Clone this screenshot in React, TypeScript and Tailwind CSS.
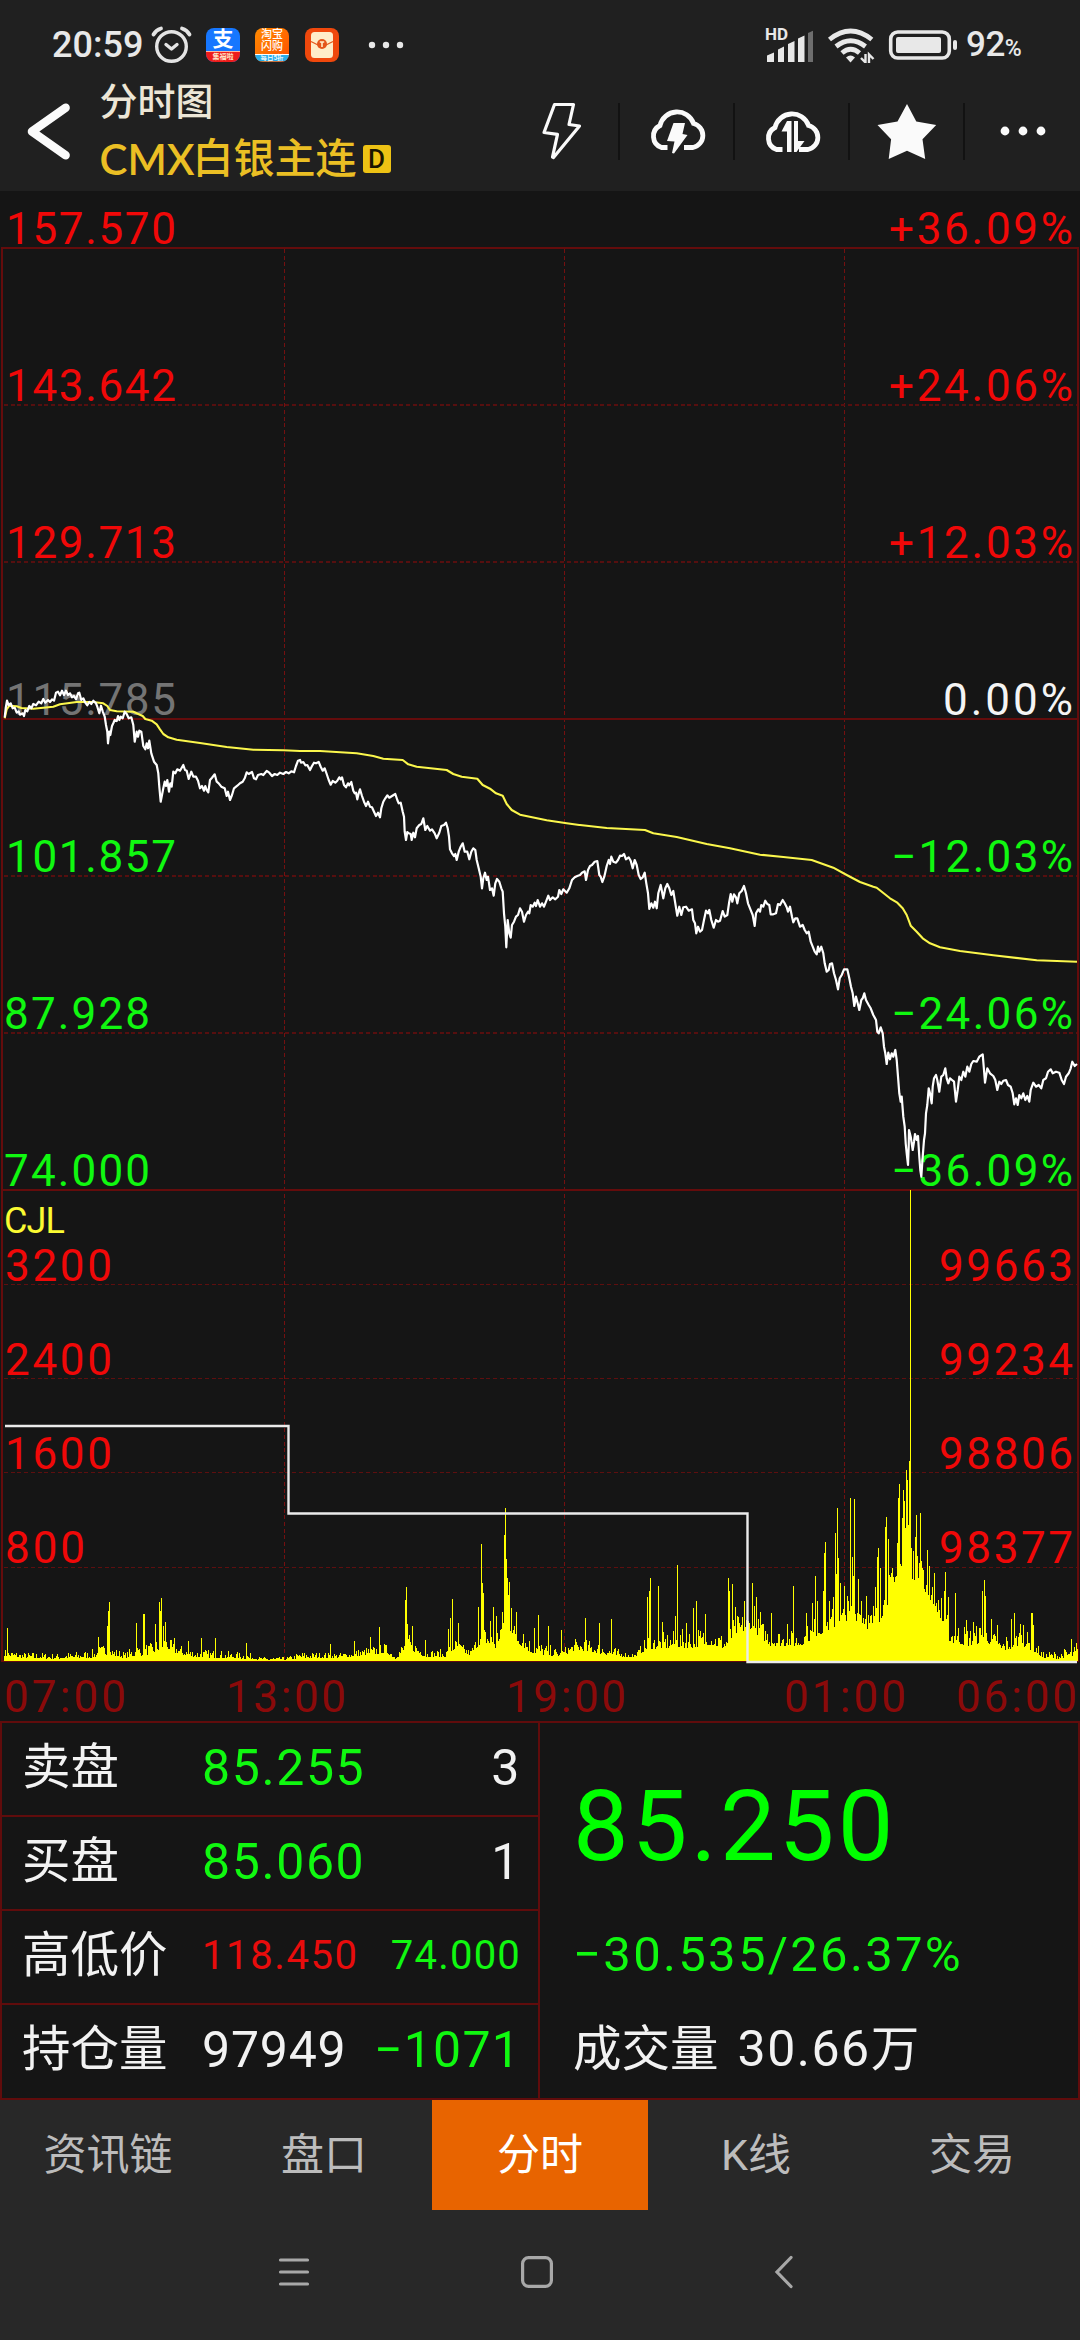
import type { ReactNode } from "react";

const RED = "#f00808";
const GREEN = "#10f810";

type Run = { x: number; y: number; d: string };

const priceRuns: Run[] = [
  {
    x: 0,
    y: 640,
    d: "14,232 17,205 21,182 26,196 32,190 38,205 44,203 50,218 56,214 60,224 68,220 72,228 76,210 82,214 88,198 94,205 100,192 108,196 116,185 124,190 130,177 136,188 144,180 150,186 156,178 162,182 168,158 174,155 180,166 186,152 192,165 198,152 204,165 210,160 216,172 222,168 228,178 234,160 238,158 244,180 250,175 256,188 262,196 268,186 274,192 280,182 288,190 292,200 298,220 303,197 308,214 314,230 318,255 322,275 324,310 328,275 331,285 336,258 340,250 344,240 350,243 354,228 358,240 362,230 368,235 374,215 380,222 386,235 394,232 400,255 404,305 410,275 414,290 418,272 424,275 430,318 436,328 440,310 444,325 448,302 454,340 462,365 470,375 475,400 478,440 482,485 486,465 490,445 494,425 498,438 502,420 507,455 511,430 515,440 520,395 526,400 532,388 540,392 550,375 555,390 560,392 566,417 574,395 580,410 588,410 594,422 600,445 606,438 612,452 616,438 620,450 625,457 630,420 636,413 644,403 650,425 656,430 664,440 674,445 680,468 684,455 690,480 696,465 702,445 712,437 720,430 728,425 734,415 740,397 746,402 756,396 762,415 768,418 774,405 784,402 790,405 800,393 808,398 816,408 824,402 832,405 840,398 850,402 858,396 866,400 874,394 882,397 888,378 894,362 900,360",
  },
  {
    x: 290,
    y: 700,
    d: "33,188 40,186 46,196 52,195 60,210 66,198 72,188 78,190 86,186 92,200 98,212 104,205 110,222 116,240 122,254 128,243 136,248 142,242 148,232 152,238 156,232 162,255 168,262 174,250 178,256 184,246 190,272 194,280 198,278 202,298 206,280 210,268 216,288 222,305 228,318 234,305 240,320 246,322 252,335 258,348 264,338 270,352 274,325 280,305 286,295 292,286 298,293 306,288 316,282 322,300 326,310 332,308 338,335 342,350 344,395 348,420 352,396 356,400 362,402 365,420 370,398 375,412 380,385 388,375 394,372 400,355 406,390 412,378 420,392 426,388 434,400 440,415 448,398 454,378 462,375 468,368 473,385 477,410 480,448 486,460 492,468 496,462 500,480 506,455 512,440 518,430 524,455 532,455 538,478 544,455 550,445 556,450 560,480 566,505 572,530 576,565 580,535 585,518 590,540 594,530 600,570 606,565 611,587 616,550 621,537 628,545 634,565 638,575 642,640 646,680 649,742 653,660 658,700 662,713 666,675 672,665 678,650 684,645 690,625 696,635 702,665 708,645 714,635 718,640 722,615 728,620 734,608 738,618 743,600 750,620 756,610 762,620 768,605 775,587 780,600 788,592 796,598 804,590 808,570 814,582 820,568 830,578 838,565 846,540 854,532 862,528 870,525 876,518 884,514 888,540 894,510 900,498",
  },
  {
    x: 580,
    y: 760,
    d: "36,315 44,305 52,303 58,345 62,350 67,366 73,350 80,318 86,300 90,312 94,290 100,305 108,308 114,300 120,287 126,288 132,282 138,298 146,292 152,302 158,325 164,300 170,315 176,345 182,357 188,352 194,338 199,370 204,400 208,447 214,430 220,443 225,425 230,445 235,400 242,375 250,415 256,385 262,372 268,385 274,405 280,393 285,425 292,467 298,440 304,465 310,442 318,440 326,452 336,448 340,480 345,490 349,520 354,500 360,515 366,510 372,480 378,452 384,460 388,450 394,480 401,503 408,480 414,485 420,482 428,453 434,470 442,465 447,430 452,402 457,425 462,403 468,412 472,430 478,400 485,393 492,378 498,400 504,430 510,445 518,465 524,498 528,460 535,448 540,455 544,435 550,440 556,422 562,432 568,435 572,463 580,463 588,460 594,432 600,435 608,420 614,430 620,442 624,455 630,440 636,470 640,487 646,475 652,475 660,500 668,495 674,510 680,520 686,515 692,545 698,560 704,575 710,583 714,560 718,575 724,560 730,580 734,610 740,635 746,630 750,612 756,610 762,640 768,660 774,688 779,655 785,645 792,628 802,628 808,655 813,680 818,700 823,738 828,710 833,730 838,750 844,720 848,715 853,700 858,720 866,735 872,745 880,765 888,780",
  },
  {
    x: 780,
    y: 860,
    d: "292,515 296,520 302,502 308,520 312,560 316,580 320,612 325,578 330,598 335,580 340,590 346,570 350,600 354,650 358,700 362,725 365,710 370,770 374,800 377,850 380,880 384,915 386,860 387,810 392,830 395,850 398,870 402,845 405,822 410,840 414,828 418,890 421,930 424,950 428,890 432,840 435,820 438,760 442,735 446,685 450,700 455,730 458,680 462,655 468,645 472,660 478,695 484,650 490,645 496,625 500,655 505,670 510,655 516,660 522,665 528,725 533,690 538,650 544,660 550,635 556,650 562,620 568,635 574,612 580,603 590,605 598,590 608,583 612,630 615,668 622,625 630,640 640,648 646,660 652,690 658,665 664,672 670,662 678,660 684,675 692,680 698,700 703,733 708,715 713,735 718,705 724,715 730,700 736,720 742,708 748,725 752,690 760,668 768,680 776,675 784,685 790,660 798,655 804,635 812,628 818,640 828,635 838,638 845,660 852,672 858,650 866,640 872,625 877,605 884,618 891,612",
  },
];

const averageRuns: Run[] = [
  {
    x: 0,
    y: 640,
    d: "14,235 20,208 28,197 50,199 64,204 100,206 160,200 180,193 230,186 280,186 310,190 322,198 330,210 350,214 400,215 415,222 428,228 436,237 455,242 470,253 480,268 490,282 505,292 530,299 600,309 680,321 760,329 850,331 900,333",
  },
  {
    x: 290,
    y: 700,
    d: "90,153 200,160 250,168 280,176 338,180 355,193 380,200 470,210 490,222 515,230 562,236 578,255 600,266 618,280 638,287 650,312 665,330 690,344 770,361 830,370 868,375",
  },
  {
    x: 580,
    y: 760,
    d: "0,195 80,204 195,210 220,220 290,231 380,252 450,265 540,284 610,291 695,300 760,323 800,345 840,366 880,380",
  },
  {
    x: 780,
    y: 860,
    d: "290,83 330,115 352,128 368,145 380,165 392,197 410,215 428,235 450,250 480,262 540,273 640,286 770,301 891,305",
  },
];

const toPoints = (runs: Run[]) =>
  runs
    .flatMap((r) =>
      r.d.split(" ").map((p) => {
        const [px, py] = p.split(",").map(Number);
        return `${(r.x + px / 3).toFixed(1)},${(r.y + py / 3).toFixed(1)}`;
      }),
    )
    .join(" ");

// [x, low, high] – range of the per-minute volume
const envelope: [number, number, number][] = [
  [4, 5, 12], [20, 3, 9], [60, 2, 8], [90, 3, 11], [105, 6, 18], [125, 3, 9], [135, 5, 18], [150, 6, 18],
  [164, 14, 26], [175, 8, 18], [190, 4, 13], [220, 3, 11], [250, 2, 8], [262, 1, 4], [285, 1, 4], [300, 3, 9],
  [340, 3, 9], [360, 5, 13], [385, 8, 18], [395, 2, 8], [408, 12, 28], [425, 4, 11], [445, 4, 12], [455, 12, 22],
  [470, 5, 12], [482, 20, 36], [495, 12, 30], [506, 36, 64], [515, 20, 36], [530, 8, 24], [545, 6, 18],
  [560, 4, 11], [575, 11, 22], [600, 7, 22], [620, 4, 11], [635, 4, 8], [648, 12, 28], [670, 13, 30], [690, 13, 34],
  [710, 16, 34], [725, 12, 28], [735, 26, 46], [750, 32, 50], [770, 15, 34], [800, 15, 30], [820, 26, 50],
  [845, 40, 60], [860, 40, 66], [873, 26, 50], [890, 62, 90], [905, 86, 136], [918, 78, 108], [935, 54, 70],
  [950, 18, 42], [970, 15, 35], [985, 20, 40], [1000, 8, 24], [1020, 16, 35], [1033, 10, 25], [1042, 3, 9],
  [1060, 2, 12], [1077, 5, 16],
];

const spikes: [number, number][] = [
  [7, 33], [98, 24], [107, 35], [108, 50], [109, 59], [136, 38], [143, 47], [144, 47], [155, 37], [159, 59],
  [160, 50], [161, 63], [163, 35], [165, 39], [174, 23], [188, 20], [201, 23], [215, 23], [246, 18], [330, 17],
  [354, 20], [370, 24], [379, 34], [405, 61], [406, 74], [407, 37], [412, 35], [425, 21], [448, 32], [450, 43],
  [452, 62], [458, 38], [478, 54], [481, 117], [482, 78], [483, 68], [490, 40], [493, 54], [496, 45], [504, 126],
  [505, 153], [506, 102], [507, 83], [508, 66], [509, 79], [511, 53], [516, 49], [523, 27], [534, 33], [538, 46],
  [548, 35], [561, 31], [585, 43], [599, 38], [611, 42], [647, 64], [649, 70], [650, 83], [658, 75], [662, 39],
  [675, 45], [677, 96], [686, 38], [693, 53], [696, 60], [705, 47], [728, 83], [729, 70], [732, 77], [735, 54],
  [744, 60], [752, 78], [754, 55], [756, 64], [760, 49], [771, 48], [787, 37], [793, 75], [806, 48], [812, 58],
  [815, 85], [817, 60], [823, 70], [824, 108], [825, 119], [829, 60], [833, 64], [835, 128], [836, 87], [837, 153],
  [838, 103], [840, 78], [844, 75], [847, 65], [850, 163], [852, 104], [853, 85], [854, 162], [858, 82], [861, 60],
  [866, 65], [873, 55], [875, 74], [877, 104], [878, 113], [880, 93], [885, 134], [886, 144], [888, 122], [891, 88],
  [896, 85], [897, 118], [898, 163], [899, 177], [900, 97], [902, 143], [903, 171], [904, 160], [905, 133],
  [906, 191], [907, 181], [908, 136], [909, 200], [910, 471], [911, 113], [913, 110], [915, 124], [916, 146],
  [917, 105], [920, 148], [921, 100], [923, 91], [927, 111], [929, 95], [934, 88], [941, 63], [944, 70], [945, 89],
  [948, 64], [955, 68], [966, 41], [973, 39], [982, 70], [984, 81], [985, 65], [991, 42], [997, 36], [1011, 42],
  [1014, 48], [1020, 37], [1023, 36], [1031, 48], [1032, 48], [1033, 36], [1071, 22], [1076, 18],
];

function volumePath() {
  const spikeAt = new Map(spikes);
  let seed = 7;
  let d = "";
  for (let x = 4; x <= 1077; x++) {
    seed = (seed * 16807) % 2147483647;
    const r = seed / 2147483647;
    let i = 0;
    while (i < envelope.length - 2 && envelope[i + 1][0] < x) i++;
    const [x0, l0, h0] = envelope[i];
    const [x1, l1, h1] = envelope[i + 1];
    const t = Math.min(1, Math.max(0, (x - x0) / (x1 - x0)));
    const lo = l0 + (l1 - l0) * t;
    const hi = h0 + (h1 - h0) * t;
    const h = Math.round(Math.max(spikeAt.get(x) ?? 0, lo + (hi - lo) * r * r));
    d += `M${x} 1661v-${h}h1v${h}z`;
  }
  return d;
}

type Label = { t: string; y: number; x: number; w: number; c: string };

const priceLabels: Label[] = [
  { t: "157.570", y: 244, x: 6, w: 170, c: RED },
  { t: "143.642", y: 401, x: 6, w: 170, c: RED },
  { t: "129.713", y: 558, x: 6, w: 170, c: RED },
  { t: "115.785", y: 715, x: 6, w: 170, c: "#747474" },
  { t: "101.857", y: 872, x: 6, w: 170, c: GREEN },
  { t: "87.928", y: 1029, x: 4, w: 146, c: GREEN },
  { t: "74.000", y: 1186, x: 4, w: 146, c: GREEN },
  { t: "+36.09%", y: 244, x: 889, w: 184, c: RED },
  { t: "+24.06%", y: 401, x: 889, w: 184, c: RED },
  { t: "+12.03%", y: 558, x: 889, w: 184, c: RED },
  { t: "0.00%", y: 715, x: 943, w: 130, c: "#f4f4f4" },
  { t: "−12.03%", y: 872, x: 891, w: 182, c: GREEN },
  { t: "−24.06%", y: 1029, x: 891, w: 182, c: GREEN },
  { t: "−36.09%", y: 1186, x: 891, w: 182, c: GREEN },
];

const volumeLabels: Label[] = [
  { t: "3200", y: 1281, x: 5, w: 107, c: RED },
  { t: "2400", y: 1375, x: 5, w: 107, c: RED },
  { t: "1600", y: 1469, x: 5, w: 107, c: RED },
  { t: "800", y: 1563, x: 5, w: 80, c: RED },
  { t: "99663", y: 1281, x: 939, w: 134, c: RED },
  { t: "99234", y: 1375, x: 939, w: 134, c: RED },
  { t: "98806", y: 1469, x: 939, w: 134, c: RED },
  { t: "98377", y: 1563, x: 939, w: 134, c: RED },
];

const timeLabels: Label[] = [
  { t: "07:00", y: 1712, x: 4, w: 122, c: "#8b0a0a" },
  { t: "13:00", y: 1712, x: 226, w: 120, c: "#8b0a0a" },
  { t: "19:00", y: 1712, x: 506, w: 120, c: "#8b0a0a" },
  { t: "01:00", y: 1712, x: 784, w: 122, c: "#8b0a0a" },
  { t: "06:00", y: 1712, x: 956, w: 121, c: "#8b0a0a" },
];

function Chart() {
  return (
    <svg className="block h-[1530px] w-[1080px] overflow-visible font-['Roboto',sans-serif] text-[44px]" viewBox="0 191 1080 1530">
      <g stroke="#741010" fill="none" strokeWidth="1" strokeDasharray="4 2.700" shapeRendering="crispEdges">
        {[284, 564, 844].map((x) => (
          <path key={x} d={`M${x}.5 249V1661`} />
        ))}
        {[1284, 1378, 1472, 1567].map((y) => (
          <path key={y} d={`M4 ${y}.5H1077`} stroke="#5e0f0f" />
        ))}
      </g>
      <g stroke="#560f0f" fill="none" strokeWidth="2" strokeDasharray="4 2.700" shapeRendering="crispEdges">
        {[405, 562, 876, 1033].map((y) => (
          <path key={y} d={`M4 ${y}H1077`} />
        ))}
      </g>
      <g stroke="#640c0c" fill="none" strokeWidth="2" shapeRendering="crispEdges">
        <path d="M2 248H1078V1661H2Z" />
        <path d="M2 719H1078M2 1190H1078" />
      </g>
      {[...priceLabels, ...volumeLabels, ...timeLabels].map((l) => (
        <text key={l.t + l.x} x={l.x} y={l.y} textLength={l.w} fill={l.c}>
          {l.t}
        </text>
      ))}
      <text x="4" y="1233" fill="#fbfb32" className="text-[36px]" textLength="61">
        CJL
      </text>
      <path d={volumePath()} fill="#ffff00" shapeRendering="crispEdges" />
      <path d="M5 1426H288.5V1513.5H747.5V1662H1077" fill="none" stroke="#ebebeb" strokeWidth="2.400" />
      <polyline points={toPoints(averageRuns)} fill="none" stroke="#fbf74c" strokeWidth="2.100" strokeLinejoin="round" />
      <polyline points={toPoints(priceRuns)} fill="none" stroke="#ffffff" strokeWidth="2.200" strokeLinejoin="round" />
    </svg>
  );
}

function StatusBar() {
  return (
    <div className="flex h-[80px] w-full items-center pt-[9px] text-[#e8e8e8]">
      <div className="ml-[52px] w-[97px] text-[36px] leading-[40px] font-medium whitespace-nowrap">20:59</div>
      <svg className="h-10 w-[46px]" viewBox="149 24 46 40" fill="none" stroke="#e4e4e4">
        <circle cx="171.5" cy="45.5" r="14.8" strokeWidth="3.400" />
        <path d="M153.500 33.500 Q156 29 161 27.500M189.500 33.500 Q187 29 182 27.500" strokeWidth="3.800" strokeLinecap="round" />
        <path d="M166 43.500l5.500 4.500 5.500-4.500" strokeWidth="3.400" strokeLinecap="round" strokeLinejoin="round" />
      </svg>
      <div className="ml-[11px] flex h-[34px] w-[34px] flex-col rounded-[8px] bg-[#1677ff] text-center text-white">
        <span className="h-[23px] text-[21px] leading-[23px] font-bold">支</span>
        <span className="h-[11px] rounded-b-[8px] border-t border-[#ffb49c] bg-[#ee1c1c] text-[7px] leading-[10px] font-bold text-[#ffe6c8]">集福啦</span>
      </div>
      <div className="ml-[15px] flex h-[34px] w-[34px] flex-col rounded-[8px] bg-linear-to-br from-[#ff8a00] to-[#ff4a00] text-center font-medium text-white">
        <span className="h-[13px] text-[11px] leading-[14px]">淘宝</span>
        <span className="h-[13px] text-[11px] leading-[12px]">闪购</span>
        <span className="h-2 rounded-b-[8px] border-t border-white bg-[#2aaeea] text-[6.5px] leading-[7px] whitespace-nowrap">每日5折</span>
      </div>
      <svg className="ml-4 h-[34px] w-[34px]" viewBox="0 0 34 34">
        <rect width="34" height="34" rx="8" fill="#f0480c" />
        <rect x="6" y="4" width="22" height="26" rx="3.500" fill="#ffedc9" />
        <path d="M6 13.500Q11 16 13 17M28 13.500Q23 16 21 17" stroke="#e4571b" strokeWidth="1.200" fill="none" />
        <circle cx="17" cy="16" r="5" fill="#e4551b" />
        <path d="M14.800 14h4.400M17 14v5" stroke="#ffedc9" strokeWidth="1.600" />
      </svg>
      <svg className="ml-[29px] h-2 w-9" viewBox="0 0 36 8" fill="#e8e8e8">
        <circle cx="4" cy="4" r="3.200" />
        <circle cx="18" cy="4" r="3.200" />
        <circle cx="32" cy="4" r="3.200" />
      </svg>
      <div className="ml-auto flex items-center">
        <div className="relative h-9 w-12">
          <span className="absolute -top-[3px] left-0 text-[17px] leading-[20px] font-bold">HD</span>
          <svg className="h-9 w-12" viewBox="764 26 48 36" fill="#e8e8e8">
            <path d="M766 54.500l7-3V61h-7zM777 48.500l6-3V61h-6zM787 43l6.500-3V61H787zM797 37.500l6.500-3V61H797z" />
            <path d="M807 32l6.500-3V61H807z" fill="#6e6e6e" />
          </svg>
        </div>
        <svg className="ml-[13px] h-9 w-[50px]" viewBox="825 26 50 36" fill="none" stroke="#e8e8e8" strokeWidth="4.800">
          <path d="M828.500 38.500Q849.600 21.500 870.800 38.500" />
          <path d="M835 45.500Q849.600 34 864.500 45.500" />
          <path d="M841 52Q849.600 44.500 858.500 52" />
          <path d="M845 56.500q4.500-4 9 0l-4.500 5z" fill="#e8e8e8" stroke="none" />
          <path d="M864.500 53v8.500l-4.500-4.500M868 62v-8.500l4.500 4.500" strokeWidth="2.400" />
        </svg>
        <svg className="ml-[12px] h-8 w-[70px]" viewBox="887 28 70 32">
          <rect x="889.700" y="31" width="58.600" height="26" rx="7" fill="none" stroke="#e8e8e8" strokeWidth="3.600" />
          <rect x="895" y="36" width="45" height="16" rx="2" fill="#e8e8e8" />
          <rect x="952" y="39" width="4" height="10" rx="2" fill="#e8e8e8" />
        </svg>
        <div className="mr-[56px] ml-[8px] flex w-[58px] items-baseline whitespace-nowrap">
          <span className="text-[35px] leading-[38px] font-medium tracking-[-0.500px]">92</span>
          <span className="text-[23px] leading-[23px] font-medium">%</span>
        </div>
      </div>
    </div>
  );
}

function ToolIcon({ children, divider = true }: { children: ReactNode; divider?: boolean }) {
  return (
    <div className="flex h-[58px] w-[115px] items-center">
      <div className="flex flex-1 justify-center">{children}</div>
      {divider && <div className="h-[57px] w-[2px] bg-[#121212]" />}
    </div>
  );
}

const CLOUD = "M668.500 147.500H662.500A12 12 0 0 1 661 125.500A17.500 17.500 0 0 1 694.500 123.500A12.300 12.300 0 0 1 694 147.500H685";

function Header() {
  return (
    <div className="flex h-[111px] w-full items-start">
      <svg className="mt-[20px] ml-[24px] h-[64px] w-[50px]" viewBox="25 100 50 64" fill="none" stroke="#fafafa">
        <path d="M67 107.500L33 131.500L67 155.500" strokeWidth="8.500" strokeLinecap="round" strokeLinejoin="round" />
      </svg>
      <div className="ml-[26px] flex w-[409px] flex-col">
        <div className="mt-px h-[49px] text-[38px] leading-[42px] font-medium text-[#ece6d6]">分时图</div>
        <div className="flex h-[58px] items-center text-[41px] leading-[58px] font-medium text-[#ebbf24]">
          <span className="w-[93px] font-['Lato','Noto_Sans_CJK_SC',sans-serif] text-[42px] font-semibold">CMX</span>
          <span className="-mt-[1px]">白银主连</span>
          <span className="ml-[6px] flex h-7 w-7 items-center justify-center rounded-[3px] bg-[#edc214] text-[26px] leading-7 font-medium text-[#1a1500]">D</span>
        </div>
      </div>
      <div className="mt-[22px] flex">
        <ToolIcon>
          <svg className="h-[58px] w-[44px]" viewBox="542 102 44 58" fill="none" stroke="#fafafa" strokeWidth="3.200" strokeLinejoin="round">
            <path d="M556.500 104.500H575.500L571 124.500L581.500 126L555.500 157.500L554.500 157L559.500 134.300L546 132.500Z" />
          </svg>
        </ToolIcon>
        <ToolIcon>
          <svg className="h-[48px] w-[64px]" viewBox="646 107 64 48">
            <path d={CLOUD} fill="none" stroke="#fafafa" strokeWidth="4.800" />
            <path d="M674.500 123H686L683.500 134L688.500 135L675 153.500L673 153L675.500 141.500L668 141Z" fill="#fafafa" />
          </svg>
        </ToolIcon>
        <ToolIcon>
          <svg className="h-[48px] w-[64px]" viewBox="646 107 64 48">
            <path d={CLOUD} transform="translate(0 2)" fill="none" stroke="#fafafa" strokeWidth="4.800" />
            <path d="M673 121H677.500V152H673V131.500H667.500ZM680 121H684V141H690.500L682.500 152H680Z" fill="#fafafa" />
          </svg>
        </ToolIcon>
        <ToolIcon>
          <svg className="h-[58px] w-[60px]" viewBox="878.500 102 60 58" fill="#fafafa">
            <path d="M908.500 104L917.800 121.500L937.700 125L924 139.300L926.700 159L908.500 150.700L890.200 159L892.600 139.300L879 125L899 121.500Z" />
          </svg>
        </ToolIcon>
        <ToolIcon divider={false}>
          <svg className="h-3 w-[46px]" viewBox="0 0 46 12" fill="#fafafa">
            <circle cx="5" cy="6" r="4.400" />
            <circle cx="23" cy="6" r="4.400" />
            <circle cx="41" cy="6" r="4.400" />
          </svg>
        </ToolIcon>
      </div>
    </div>
  );
}

function QuoteRow({ label, children, last }: { label: string; children: ReactNode; last?: boolean }) {
  return (
    <div
      className={
        last
          ? "flex h-[94px] items-center pb-[4px] pl-[20px]"
          : "flex h-[94px] items-center border-b-2 border-[#600c0c] pb-[2px] pl-[20px]"
      }
    >
      <div className="w-[180px] text-[48.500px] whitespace-nowrap">{label}</div>
      <div className="flex flex-1 items-center justify-between pr-[17px] text-[50px] tracking-[1.600px] whitespace-nowrap">{children}</div>
    </div>
  );
}

function QuotePanel() {
  return (
    <div className="flex h-[379px] w-full border-2 border-[#600c0c] text-[#f2f2f2]">
      <div className="w-[538px] border-r-2 border-[#600c0c]">
        <QuoteRow label="卖盘">
          <span className="text-[#10f810]">85.255</span>
          <span>3</span>
        </QuoteRow>
        <QuoteRow label="买盘">
          <span className="text-[#10f810]">85.060</span>
          <span>1</span>
        </QuoteRow>
        <QuoteRow label="高低价">
          <span className="text-[40px] text-[#e80c0c]">118.450</span>
          <span className="text-[40px] tracking-[1.200px] text-[#10f810]">74.000</span>
        </QuoteRow>
        <QuoteRow label="持仓量" last>
          <span className="tracking-[0.800px]">97949</span>
          <span className="tracking-[1.200px] text-[#10f810]">−1071</span>
        </QuoteRow>
      </div>
      <div className="flex-1 pl-[33px] whitespace-nowrap">
        <div className="mt-[43px] h-[120px] text-[99px] leading-[120px] tracking-[3.200px] text-[#00ff00]">85.250</div>
        <div className="mt-[39px] h-[60px] text-[49px] leading-[60px] tracking-[2.300px] text-[#10f810]">−30.535/26.37%</div>
        <div className="mt-[34px] h-[60px] text-[48.500px] leading-[60px]">
          成交量 <span className="ml-[7px] text-[50px] tracking-[1.500px]">30.66</span>万
        </div>
      </div>
    </div>
  );
}

const tabs = ["资讯链", "盘口", "分时", "K线", "交易"];

function BottomBar() {
  return (
    <div className="h-[240px] w-full bg-[#282828]">
      <div className="grid h-[110px] grid-cols-5">
        {tabs.map((t) => (
          <div
            key={t}
            className={
              t === "分时"
                ? "flex items-center justify-center bg-[#e86400] text-[43px] text-white"
                : "flex items-center justify-center text-[43px] text-[#bcbcbc]"
            }
          >
            {t}
          </div>
        ))}
      </div>
      <div className="flex h-[124px] items-center pl-[278px]">
        <svg className="h-9 w-8" viewBox="0 0 32 36" stroke="#a8a8a8" strokeWidth="3.200" strokeLinecap="round">
          <path d="M2.500 6H29.500M2.500 18H29.500M2.500 30H29.500" />
        </svg>
        <svg className="ml-[209px] h-9 w-9" viewBox="0 0 36 36" fill="none" stroke="#a8a8a8" strokeWidth="3.200">
          <rect x="3.600" y="3.600" width="28.800" height="28.800" rx="6" />
        </svg>
        <svg className="ml-[217px] h-9 w-6" viewBox="0 0 24 36" fill="none" stroke="#a8a8a8" strokeWidth="3.200" strokeLinecap="round">
          <path d="M19 3.500L5 18L19 32.500" />
        </svg>
      </div>
    </div>
  );
}

export default function App() {
  return (
    <div className="flex h-[2340px] w-[1080px] flex-col bg-[#151515] font-['Roboto','Noto_Sans_CJK_SC',sans-serif]">
      <div className="h-[191px] w-full bg-[#202020]">
        <StatusBar />
        <Header />
      </div>
      <Chart />
      <QuotePanel />
      <BottomBar />
    </div>
  );
}
